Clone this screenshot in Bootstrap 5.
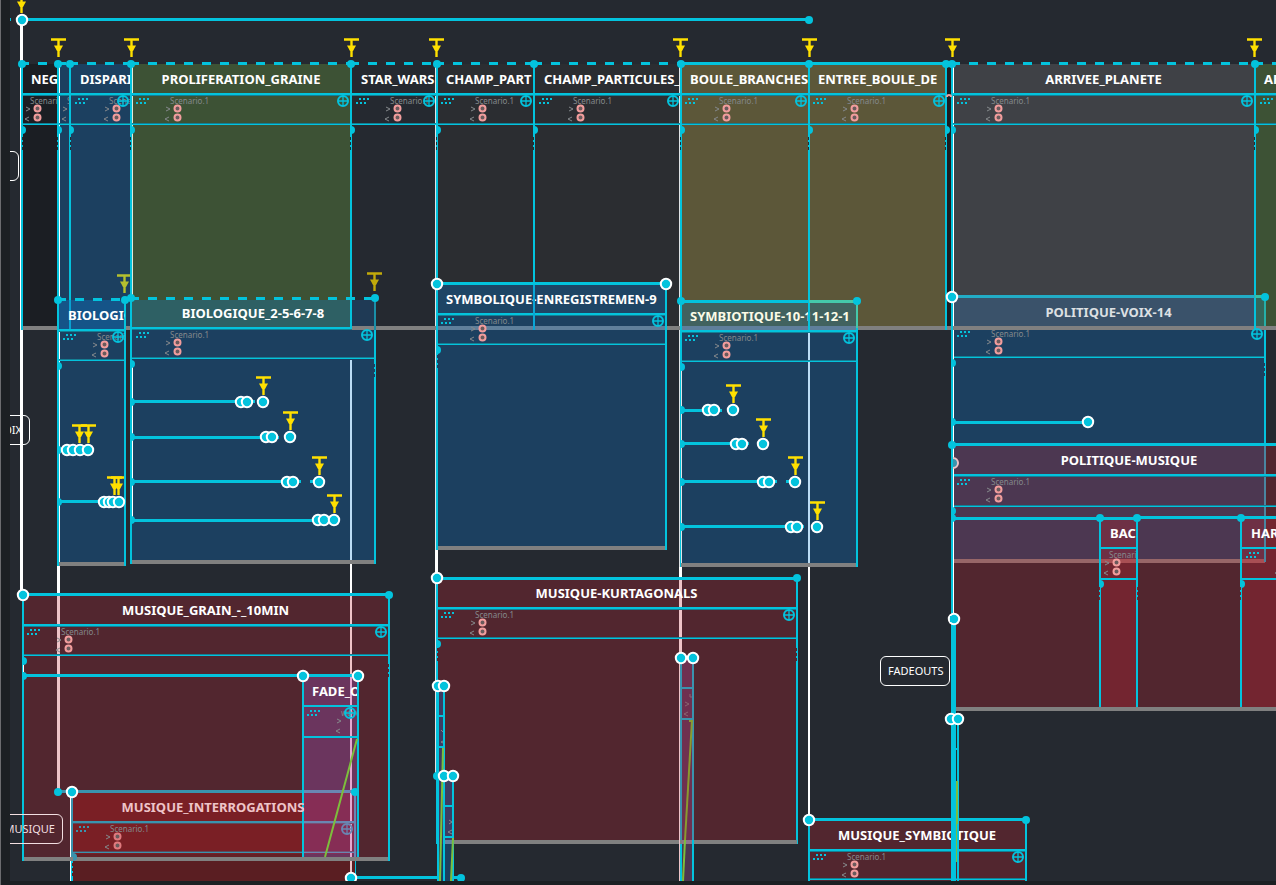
<!DOCTYPE html>
<html lang="fr">
<head>
<meta charset="utf-8">
<meta name="viewport" content="width=device-width, initial-scale=1">
<title>Partition</title>
<link href="https://cdn.jsdelivr.net/npm/bootstrap@5.3.0/dist/css/bootstrap.min.css" rel="stylesheet">
<style>
  body { background: #1c2023; font-family: "Noto Sans", sans-serif; font-size: 12px; color: #fff; border-left: 1px solid #6b6c6e; }
  .score-view { background: #252930; margin: 0 0 4px 9px; }
  /* score coordinates start at the window edge, 10px left of the view */
  .score-plane { position: absolute; top: 0; left: -10px; right: 0; bottom: 0; }
  .score-svg { position: absolute; top: 0; left: 0; width: 100%; height: 100%; overflow: visible; pointer-events: none; }
  .process-box { position: absolute; overflow: hidden; }
  .process-title { height: 28px; margin: 0; padding: 0 9px; font-size: 13px; line-height: 29px; font-weight: 700; white-space: nowrap; }
  .process-slot { height: 31px; }
  .slot-name { position: absolute; font-size: 8px; line-height: 10px; color: #85898c; white-space: nowrap; }
  .slot-add { position: absolute; right: 1px; width: 12px; height: 12px; padding: 0; border: 0; background: none; line-height: 0; color: #03c3dd; }
  .comment-box { position: absolute; height: 30px; border: 1px solid #fff; border-radius: 6px; font-size: 11px; line-height: 28px; padding: 0 7px; text-align: right; white-space: nowrap; }
</style>
</head>
<body class="vh-100 d-flex overflow-hidden">
<main class="score-view flex-fill position-relative overflow-hidden" aria-label="Partition">
  <div class="score-plane">
    <svg class="score-svg" id="under" aria-hidden="true"></svg>
    <div id="boxes"></div>
    <svg class="score-svg" id="over" aria-hidden="true"></svg>
  </div>
</main>
<script src="https://cdn.jsdelivr.net/npm/bootstrap@5.3.0/dist/js/bootstrap.bundle.min.js"></script>
<script>
const C = '#03c3dd', DIM = '#147f94', G = '#808080', W = '#fff', PINK = '#eec4c8', TINT = '#3a93ae',
      BLUE = '#1c4060', RED = '#52262f', OLIVE = '#5c5739', GREEN = '#3d5235', LEAF = '#7dbe3c', FAR = 2600;
let out = '';
const rect = (x, y, x2, y2, f) => out += `<rect x="${x}" y="${y}" width="${x2 - x}" height="${y2 - y}" fill="${f}"/>`;
const dot = (x, y, f = C) => out += `<circle cx="${x}" cy="${y}" r="4" fill="${f}"/>`;
const halfDot = (x, y, f = C) => out += `<path d="M${x} ${y - 4}a4 4 0 0 1 0 8z" fill="${f}"/>`;
const ring = (x, y) => out += `<circle cx="${x}" cy="${y}" r="5.2" fill="${C}" stroke="#fff" stroke-width="2"/>`;
const dashed = (x, y, x2, f = C) => out += `<path d="M${x} ${y}H${x2}" stroke="${f}" stroke-width="3" stroke-dasharray="9 9"/>`;
const line = (x, y, x2, y2, f, w = 2) => out += `<path d="M${x} ${y}L${x2} ${y2}" stroke="${f}" stroke-width="${w}"/>`;
const trigger = (x, y, f = '#ffe000', clip = 8) =>
  out += `<path d="M${x - 7} ${y - 17.5}h${7 + clip}M${x + .5} ${y - 18}V${y}" stroke="${f}" stroke-width="2.4" fill="none"/><path d="M${x - 4} ${y - 11.5}h9l-3 5.5h-3z" fill="${f}"/>`;
const slotLines = (x, x2, s, h = 30, f = C, d = DIM) => {
  rect(x, s, x2, s + 2, f); rect(x, s + 2, x2, s + 3, d);
  rect(x, s + h, x2, s + h + 1, d); rect(x, s + h + 1, x2, s + h + 2, f);
};
const ticks = (x, y, f) => { for (let i = 0; i < 3; i++) rect(x, y + i * 5, x + 1, y + i * 5 + 3, f); };
const drag = (x, s, f = C) => {
  for (let i = 0; i < 4; i++) { if (i) rect(x + 4 * i - 1, s + 5, x + 4 * i + 1, s + 7, f); }
  for (let i = 0; i < 3; i++) { rect(x + 4 * i, s + 9, x + 4 * i + 2, s + 11, f); rect(x + 4 * i + 3, s + 5, x + 4 * i + 5, s + 6, f); }
};
const chevrons = (x, s) => out += `<path d="M${x - 12} ${s + 14}l4 2l-4 2M${x - 9} ${s + 24}l-4 2l4 2" stroke="#85898c" fill="none"/>`;
const ports = (x, s, n = 2, f = '#f29d9d') => {
  for (let i = 0; i < n; i++) out += `<circle cx="${x}" cy="${s + 15.5 + 9 * i}" r="3" fill="#6a5a5c" stroke="${f}" stroke-width="2"/>`;
};

/* x, right edge, slot top, title, name x, slot name, options */
const boxes = [
  [22, 57, 93, 'NEG', 30, 'Scenario.1', { cut: 1, plain: 1 }],
  [59, 69, 93, '', 67, 'Scenario.1', { plain: 1, noport: 1 }],
  [71, 130, 93, 'DISPARI', 109, 'Scenario.1', { cut: 1, add: 1 }],
  [132, 350, 93, 'PROLIFERATION_GRAINE', 170, 'Scenario.1', { add: 1 }],
  [352, 436, 93, 'STAR_WARS', 390, 'Scenario.1', { cut: 1, add: 1 }],
  [437, 533, 93, 'CHAMP_PART', 475, 'Scenario.1', { cut: 1, add: 1 }],
  [535, 680, 93, 'CHAMP_PARTICULES_', 573, 'Scenario.1', { cut: 1, add: 1 }],
  [681, 808, 93, 'BOULE_BRANCHES', 719, 'Scenario.1', { cut: 1, add: 1 }],
  [809, 946, 93, 'ENTREE_BOULE_DE', 847, 'Scenario.1', { cut: 1, add: 1 }],
  [953, 1254, 93, 'ARRIVEE_PLANETE', 991, 'Scenario.1', { add: 1 }],
  [1255, 1500, 93, 'ARRIVEE', 1294, 'Scenario.1', { cut: 1 }],
  [59, 125, 329, 'BIOLOGIQUE', 97, 'Scenario.1', { cut: 1, add: 1 }],
  [132, 374, 327, 'BIOLOGIQUE_2-5-6-7-8', 170, 'Scenario.1', { add: 1 }],
  [437, 665, 313, 'SYMBOLIQUE-ENREGISTREMEN-9', 475, 'Scenario.1', { cut: 1, add: 1 }],
  [681, 856, 330, 'SYMBIOTIQUE-10-11-12-1', 719, 'Scenario.1', { cut: 1, add: 1, color: '#fbfbe6' }],
  [953, 1264, 326, 'POLITIQUE-VOIX-14', 991, 'Scenario.1', { add: 1, color: '#dde0e3' }],
  [953, 1305, 474, 'POLITIQUE-MUSIQUE', 991, 'Scenario.1', {}],
  [1101, 1136, 547, 'BAC', 1109, 'Scenario.1', { cut: 1, plain: 1 }],
  [1242, 1500, 547, 'HARMONIE', 1280, 'Scenario.1', { cut: 1 }],
  [23, 388, 624, 'MUSIQUE_GRAIN_-_10MIN', 61, 'Scenario.1', { add: 1 }],
  [303, 357, 705, 'FADE_O', 341, 'wave', { cut: 1, add: 1, noport: 1 }],
  [72, 354, 821, 'MUSIQUE_INTERROGATIONS', 110, 'Scenario.1', { add: 1, color: '#eec4c8', tint: '#3a93ae' }],
  [437, 796, 607, 'MUSIQUE-KURTAGONALS', 475, 'Scenario.1', { add: 1 }],
  [809, 1025, 849, 'MUSIQUE_SYMBIOTIQUE', 847, 'Scenario.1', { add: 1 }],
];

/* ---- fills ---- */
rect(23, 64, 57, 326, '#1b1e23');
rect(58, 64, 131, 330, BLUE);
rect(132, 64, 350, 326, GREEN);
rect(437, 64, 680, 326, '#2b2d31');
rect(681, 64, 946, 326, OLIVE);
rect(946, 64, 952, 326, '#1b1e23');
rect(952, 64, 1255, 326, '#3f4146');
rect(1255, 64, FAR, 326, GREEN);

/* ---- sync lines ---- */
rect(20, 20, 23, 595, W);
rect(57, 64, 60, 593, W);
rect(350, 564, 352, 878, W);
rect(435, 64, 438, 776, '#dfe3e6'); rect(435, 550, 438, 576, W);
rect(679, 64, 682, 881, '#dfe3e6'); rect(679, 567, 682, 577, W);
rect(808, 567, 810, 820, W);
rect(952, 64, 954, 619, W);
rect(132, 64, 133, 298, '#dfe8d8');

/* ---- top row ---- */
rect(22, 326, FAR, 330, G);
[[22, 57], [59, 69], [71, 130], [132, 350], [352, 436], [437, 533], [535, 680], [681, 808], [810, 945], [953, 1254], [1256, 1500]]
  .forEach(([a, b]) => slotLines(a, b, 93));
[[20, 58], [57, 69], [69, 130], [130, 351], [350, 436], [435, 533], [533, 681], [951, 1254], [1254, 1500]]
  .forEach(([a, b]) => dashed(a, 63.5, b));
rect(680, 62, 952, 65, C);
[22, 58, 70, 131, 351, 437, 534, 681, 809, 946, 952, 1255].forEach(x => {
  rect(x - 1, 64, x + 1, x === 952 ? 620 : 330, C);
  dot(x, 64); halfDot(x, 130);
  if (x !== 952) ticks(x === 22 || x === 70 ? x : x - 1, 137, '#1c3038');
});
out += '<path d="M947 97a2 2 0 0 1 4 0" stroke="#f29d9d" stroke-width="2" fill="none"/>';
[58, 131, 351, 436, 680, 809, 952, 1254].forEach(x => trigger(x, 57));
rect(10, 18, 11, 21, C); rect(22, 18, 809, 21, C); dot(809, 20); ring(22, 20);
trigger(21, 13);

/* ---- BIOLOGIQUE, short ---- */
rect(59, 300, 125, 330, '#155488'); rect(60, 330, 125, 562, BLUE); rect(126, 330, 130, 565, '#252930');
rect(69, 300, 71, 329, '#0aa0d0');
slotLines(59, 125, 329);
dashed(57, 299.5, 125);
rect(58, 562, 125, 566, G);
rect(57, 300, 59, 566, C); rect(124, 300, 126, 566, C);
dot(58, 300); dot(125, 300); halfDot(58, 366);
trigger(124, 293, '#b5c02f', 6);
rect(58, 448, 64, 451, C); rect(58, 500, 98, 503, C); halfDot(58, 450); halfDot(58, 502);
trigger(79, 443); trigger(88, 443); trigger(114, 495); trigger(118, 495, '#ffe000', 6);
[67, 73, 80, 88].forEach(x => ring(x, 450));
[104, 109, 113, 119].forEach(x => ring(x, 502));

/* ---- BIOLOGIQUE, long ---- */
rect(132, 300, 350, 327, '#2e6064'); rect(352, 300, 375, 326, '#1f3a55');
rect(132, 330, 375, 562, BLUE);
rect(131, 364, 133, 521, W); rect(350, 300, 352, 330, C); rect(350, 360, 352, 560, '#bcddf5');
slotLines(132, 375, 327);
rect(352, 326, 375, 330, G);
dashed(130, 298.5, 375);
rect(131, 560, 375, 564, G);
rect(130, 298, 132, 564, C); rect(374, 298, 376, 330, '#1a8fa8'); rect(374, 330, 376, 564, C); ticks(374, 364, BLUE);
dot(131, 298); dot(375, 298); halfDot(131, 364);
trigger(374, 291, '#c2aa0a');
/* line top, node y, first node, last node, line end, trigger tip, start of the dash before the last node */
const row = (x, top, y, a, b, e, t, dash) => {
  rect(x, top, e, top + 3, C); halfDot(x, y); ring(a, y); ring(a + 6, y); trigger(b, t);
  if (dash) rect(dash, top, b, top + 3, C);
  ring(b, y);
};
row(131, 400, 402, 241, 263, 255, 395);
row(131, 436, 437, 266, 290, 279, 430);
row(131, 480, 482, 287, 319, 301, 475, 310);
row(131, 519, 520, 318, 334, 324, 513);

/* ---- SYMBOLIQUE ---- */
rect(438, 285, 665, 313, '#1e4565'); rect(438, 313, 665, 546, BLUE);
rect(438, 326, 665, 330, '#5f7f9b');
slotLines(438, 665, 313, 30);
rect(437, 282, 666, 285, C); rect(438, 546, 666, 550, G);
rect(436, 284, 438, 550, C); rect(665, 284, 667, 550, C); ticks(437, 355, BLUE);
halfDot(437, 350); ring(437, 284); ring(666, 284);

/* ---- SYMBIOTIQUE ---- */
rect(682, 303, 857, 326, '#41625f'); rect(682, 326, 857, 330, '#5f7f9b'); rect(682, 330, 857, 563, BLUE);
rect(808, 332, 810, 563, '#bcddf5');
slotLines(682, 857, 330);
rect(681, 300, 809, 303, C); rect(809, 300, 857, 303, '#45c8aa');
rect(681, 563, 857, 567, G); rect(680, 301, 681, 567, C); rect(681, 301, 682, 365, C);
rect(856, 303, 858, 328, '#45c8aa'); rect(856, 328, 858, 567, C);
dot(681, 301); dot(857, 301); halfDot(681, 367);
row(681, 409, 410, 708, 733, 722, 403);
row(681, 442, 444, 736, 763, 749, 437);
row(681, 480, 482, 763, 795, 777, 475, 786);
row(681, 525, 527, 791, 817, 804, 520);

/* ---- POLITIQUE ---- */
rect(954, 298, 1254, 326, '#3a526a'); rect(1256, 298, 1265, 326, '#35665a');
rect(954, 330, 1265, 444, BLUE);
rect(954, 356, 1265, 357, DIM); rect(954, 357, 1265, 358, C);
rect(953, 295, 1255, 298, '#22acc6'); rect(1255, 295, 1265, 298, '#35bfa8');
rect(1264, 298, 1266, 326, '#25afa8'); rect(1264, 330, 1266, 444, C); ticks(1264, 363, BLUE);
rect(1254, 298, 1256, 330, C);
dot(1265, 297);
rect(953, 421, 1083, 424, C); ring(1088, 422); halfDot(952, 363); halfDot(952, 422);
rect(954, 445, 1265, 559, '#4c3751'); rect(1265, 445, FAR, 559, RED);
rect(954, 559, FAR, 707, RED); rect(954, 559, 1265, 563, '#976668');
rect(1101, 519, 1136, 559, '#6e3045'); rect(1101, 559, 1136, 707, '#732530');
rect(1242, 519, 1264, 559, '#6e3045'); rect(1264, 519, FAR, 707, '#732530'); rect(1242, 559, 1264, 707, '#732530');
rect(1101, 559, 1136, 563, '#a84f54'); rect(1242, 559, 1265, 563, '#a84f54');
rect(1264, 446, 1266, 562, '#4a85a0');
slotLines(954, 1500, 474, 31);
rect(952, 443, FAR, 446, C);
rect(953, 517, 1137, 520, C); rect(1137, 516, FAR, 519, C);
rect(1101, 547, 1136, 549, C); rect(1101, 578, 1136, 580, C); rect(1242, 547, FAR, 549, C); rect(1242, 578, FAR, 580, C);
[1100, 1137, 1241].forEach(x => { rect(x - 1, 518, x + 1, 707, C); ticks(x === 1137 ? x : x - 1, 587, '#732530'); dot(x, 518); });
halfDot(1100, 584); halfDot(1241, 584);
out += '<path d="M953 458a5 5 0 0 1 0 10" fill="#3a93ae" stroke="#eec4c8" stroke-width="2"/>';
rect(951, 297, 953, 620, C);
dot(952, 445); halfDot(952, 511); halfDot(952, 518);
rect(954, 707, FAR, 711, G);
ring(952, 297);

/* ---- MUSIQUE_GRAIN ---- */
rect(24, 596, 388, 857, RED);
rect(57, 566, 60, 593, W); rect(57, 596, 60, 792, PINK); rect(350, 596, 352, 857, PINK);
slotLines(24, 388, 624);
rect(23, 593, 389, 596, C);
rect(72, 793, 355, 854, '#7a1f25'); rect(72, 854, 355, 857, '#641f25'); rect(72, 861, 355, 881, '#5a1e22');
rect(303, 677, 357, 857, '#6b355e'); rect(303, 793, 355, 854, '#862d55');
rect(350, 677, 352, 857, '#e5a8d0'); rect(350, 861, 352, 878, '#eec4c8');
rect(58, 790, 303, 793, TINT); rect(303, 790, 355, 793, '#6a86b2');
slotLines(73, 303, 821, 30, TINT, '#5a4a5c'); slotLines(303, 355, 821, 30, '#6a86b2', '#765075');
rect(70, 793, 71, 881, W); rect(71, 793, 73, 857, TINT); rect(354, 793, 356, 857, '#6a86b2');
rect(71, 861, 73, 881, C); rect(355, 861, 356, 881, C); ticks(72, 863, '#5a1e22');
rect(23, 857, 389, 861, G);
rect(22, 595, 24, 861, C); rect(388, 595, 390, 861, C); ticks(388, 664, RED); rect(23, 665, 24, 672, W);
rect(24, 674, 358, 677, C);
rect(302, 677, 304, 857, C); rect(357, 677, 359, 857, C);
rect(303, 705, 357, 707, C); rect(303, 736, 357, 738, C);
line(357, 739, 325, 857, LEAF);
dot(389, 595); halfDot(23, 661); halfDot(23, 676); halfDot(73, 857, TINT); dot(58, 792); dot(355, 792);
ring(23, 595); ring(72, 792); ring(303, 676); ring(358, 676);
rect(351, 876, 461, 879, C); dot(461, 878); ring(351, 878);

/* ---- KURTAGONALS ---- */
rect(438, 580, 796, 840, RED);
rect(679, 580, 682, 658, PINK);
slotLines(438, 796, 607);
rect(437, 577, 797, 580, C); rect(436, 578, 438, 844, C); rect(796, 578, 798, 844, C);
ticks(796, 648, RED); ticks(437, 648, RED);
rect(438, 840, 797, 844, G);
rect(682, 659, 692, 840, '#6f3050'); rect(682, 840, 692, 844, '#8f7488'); rect(682, 844, 692, 881, '#4c3751');
rect(679, 658, 680, 881, '#eec4c8');
rect(680, 658, 682, 840, TINT); rect(692, 658, 694, 840, TINT); rect(680, 844, 682, 881, C); rect(692, 840, 694, 881, C);
rect(682, 687, 692, 689, TINT); rect(682, 718, 692, 720, TINT);
out += '<path d="M685 702l4 2l-4 2M688 712l-4 2l4 2M690 694v3h2" stroke="#8c6470" fill="none"/>';
line(692, 720, 685, 840, '#8a9a2f'); line(685, 840, 683, 881, LEAF); rect(689, 720, 693, 722, '#8a9a2f');
dot(797, 578); halfDot(437, 644); ring(437, 578); ring(681, 658); ring(693, 658);
rect(438, 686, 443, 881, '#3d3d63'); rect(445, 776, 452, 844, '#3d3d63'); rect(438, 844, 452, 881, BLUE);
rect(445, 840, 452, 844, '#6285a5');
rect(437, 686, 439, 881, C); rect(443, 686, 445, 881, C); rect(452, 776, 454, 881, C);
[[715, 438, 443], [746, 438, 443], [805, 445, 452], [836, 445, 452]].forEach(([y, a, b]) => rect(a, y, b, y + 2, C));
out += '<path d="M449 820l3 2l-3 2M452 830l-4 2l4 2M441 730l2 2M443 741l-2 1l2 1" stroke="#85898c" fill="none"/>';
line(443, 748, 440, 881, LEAF); line(453, 838, 451, 881, LEAF);
dot(437, 776); ring(438, 686); ring(444, 686); ring(444, 776); ring(453, 776);

/* ---- MUSIQUE_SYMBIOTIQUE ---- */
rect(810, 821, 1025, 881, RED);
rect(809, 818, 1026, 821, C); rect(808, 820, 810, 881, C); rect(1025, 820, 1027, 881, C);
slotLines(810, 1025, 849, 29);
dot(1026, 820); ring(809, 820);

/* ---- slot headers ---- */
boxes.forEach(([x, x2, s, t, nx, n, o]) => {
  if (!o.plain) drag(nx - 34, s, o.tint);
  if (nx + 8 < x2 || o.noport) chevrons(nx + 8, s);
  if (!o.noport) ports(nx + 7.5, s, 2, o.tint ? '#e07a7e' : undefined);
});
document.getElementById('under').innerHTML = out;

/* ---- lines crossing the titles ---- */
out = '';
rect(533, 285, 535, 330, '#0aa5d5'); rect(808, 303, 810, 330, C);
rect(951, 619, 956, 881, C); rect(957, 719, 959, 881, C); rect(956, 748, 957, 750, C);
rect(956, 781, 958, 824, LEAF); rect(956, 824, 957, 862, LEAF);
ring(954, 619); rect(950, 616, 955, 622, C); ring(951, 719); ring(958, 719);
document.getElementById('over').innerHTML = out;

const addIcon = '<svg width="12" height="12" viewBox="0 0 12 12" fill="none" stroke="currentColor"><circle cx="6" cy="6" r="5" stroke-width="2"/><path d="M6 1v10M1 6h10" stroke-width="1.3"/></svg>';
document.getElementById('boxes').innerHTML = boxes.map(([x, x2, s, t, nx, n, o]) => `
  <section class="process-box" style="left:${x}px;top:${s - 28}px;width:${x2 - x}px">
    <h2 class="process-title ${o.cut ? 'text-start' : 'text-center'}" style="color:${o.color || '#fff'}">${t}</h2>
    <div class="process-slot">
      <span class="slot-name" style="left:${nx - x}px;top:31px">${n}</span>
      ${o.add ? `<button type="button" class="slot-add" aria-label="Ajouter" style="top:30px;color:${o.tint ? '#6a86b2' : C}">${addIcon}</button>` : ''}
    </div>
  </section>`).join('') + [
  [-30, 151, 49, '', W], [-15, 415, 45, 'VOIX', W], [-4, 814, 67, 'MUSIQUE', '#f3dfe2'], [880, 656, 70, 'FADEOUTS', W]
].map(([x, y, w, t, c]) => `<div class="comment-box" style="left:${x}px;top:${y}px;width:${w}px;color:${c};border-color:${c}">${t}</div>`).join('');
</script>
</body>
</html>
